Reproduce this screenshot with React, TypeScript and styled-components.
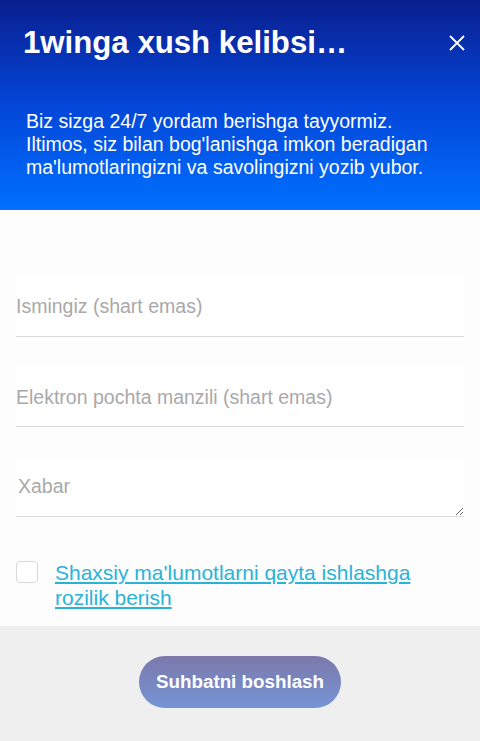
import React from "react";
import styled, { createGlobalStyle } from "styled-components";

const Global = createGlobalStyle`
  html, body { margin: 0; padding: 0; background: #efefef; }
  body { font-family: "Liberation Sans", Arial, sans-serif; }
  * { box-sizing: border-box; }
`;

const Widget = styled.div`
  width: 480px;
  height: 741px;
  display: flex;
  flex-direction: column;
  background: #efefef;
`;

const Header = styled.header`
  height: 210px;
  background: linear-gradient(180deg, #0a1f8f 0%, #0346d8 50%, #0070ff 100%);
  color: #fff;
  padding: 26px 15px 0 23px;
  display: flex;
  flex-direction: column;
`;

const TitleRow = styled.div`
  display: flex;
  align-items: center;
  justify-content: space-between;
`;

const Title = styled.h1`
  margin: 0;
  font-size: 31.2px;
  font-weight: 700;
  line-height: 34px;
  max-width: 340px;
  white-space: nowrap;
  overflow: hidden;
  text-overflow: ellipsis;
`;

const CloseButton = styled.button`
  background: none;
  border: none;
  padding: 0;
  width: 16px;
  height: 16px;
  display: flex;
  color: #fff;
`;

const Description = styled.p`
  margin: 50px 0 0 3px;
  font-size: 19.5px;
  line-height: 23px;
`;

const Form = styled.div`
  flex: 1;
  background: #fdfdfd;
  padding: 63px 16px 0 16px;
  display: flex;
  flex-direction: column;
`;

const Field = styled.div<{ $h: number; $mt: number }>`
  height: ${(p) => p.$h}px;
  margin-top: ${(p) => p.$mt}px;
  background: #fff;
  border-bottom: 1px solid #dcdcdc;
  display: flex;
  align-items: center;
  position: relative;
`;

const Input = styled.input`
  border: none;
  outline: none;
  background: transparent;
  width: 100%;
  padding: 4px 0 0 0;
  font-family: "Liberation Sans", Arial, sans-serif;
  font-size: 19.5px;
  color: #333;
  &::placeholder { color: #a9a9a9; }
`;

const TextArea = styled.textarea`
  border: none;
  outline: none;
  background: transparent;
  width: 100%;
  height: 100%;
  padding: 15px 2px 0 2px;
  font-family: "Liberation Sans", Arial, sans-serif;
  font-size: 19.5px;
  color: #333;
  resize: vertical;
  &::placeholder { color: #a9a9a9; }
`;

const ConsentRow = styled.label`
  display: flex;
  align-items: flex-start;
  gap: 17px;
  margin-top: 43px;
`;

const Check = styled.span`
  flex: none;
  width: 22px;
  height: 22px;
  margin-top: 1px;
  border: 1px solid #d9d9d9;
  border-radius: 4px;
  background: #fff;
`;

const ConsentLink = styled.a`
  color: #2ab3d9;
  font-size: 21px;
  line-height: 25px;
  text-decoration: underline;
  text-underline-offset: 2px;
`;

const Footer = styled.footer`
  height: 115px;
  background: #efefef;
  display: flex;
  justify-content: center;
  padding-top: 30px;
`;

const StartButton = styled.button`
  width: 202px;
  height: 52px;
  border: none;
  border-radius: 26px;
  background: linear-gradient(180deg, #7b79aa 0%, #7694d6 100%);
  color: #fff;
  font-family: "Liberation Sans", Arial, sans-serif;
  font-weight: 700;
  font-size: 18.8px;
`;

export default function App() {
  return (
    <>
      <Global />
      <Widget>
        <Header>
          <TitleRow>
            <Title>1winga xush kelibsi…</Title>
            <CloseButton aria-label="close">
              <svg width="16" height="16" viewBox="0 0 16 16">
                <path d="M1 1 L15 15 M15 1 L1 15" stroke="#fff" strokeWidth="1.8" />
              </svg>
            </CloseButton>
          </TitleRow>
          <Description>
            Biz sizga 24/7 yordam berishga tayyormiz.
            <br />
            Iltimos, siz bilan bog'lanishga imkon beradigan ma'lumotlaringizni va savolingizni yozib yubor.
          </Description>
        </Header>
        <Form>
          <Field $h={64} $mt={0}>
            <Input placeholder="Ismingiz (shart emas)" />
          </Field>
          <Field $h={62} $mt={28}>
            <Input placeholder="Elektron pochta manzili (shart emas)" />
          </Field>
          <Field $h={57} $mt={33}>
            <TextArea placeholder="Xabar" />
          </Field>
          <ConsentRow>
            <Check />
            <ConsentLink href="#">Shaxsiy ma'lumotlarni qayta ishlashga rozilik berish</ConsentLink>
          </ConsentRow>
        </Form>
        <Footer>
          <StartButton>Suhbatni boshlash</StartButton>
        </Footer>
      </Widget>
    </>
  );
}
